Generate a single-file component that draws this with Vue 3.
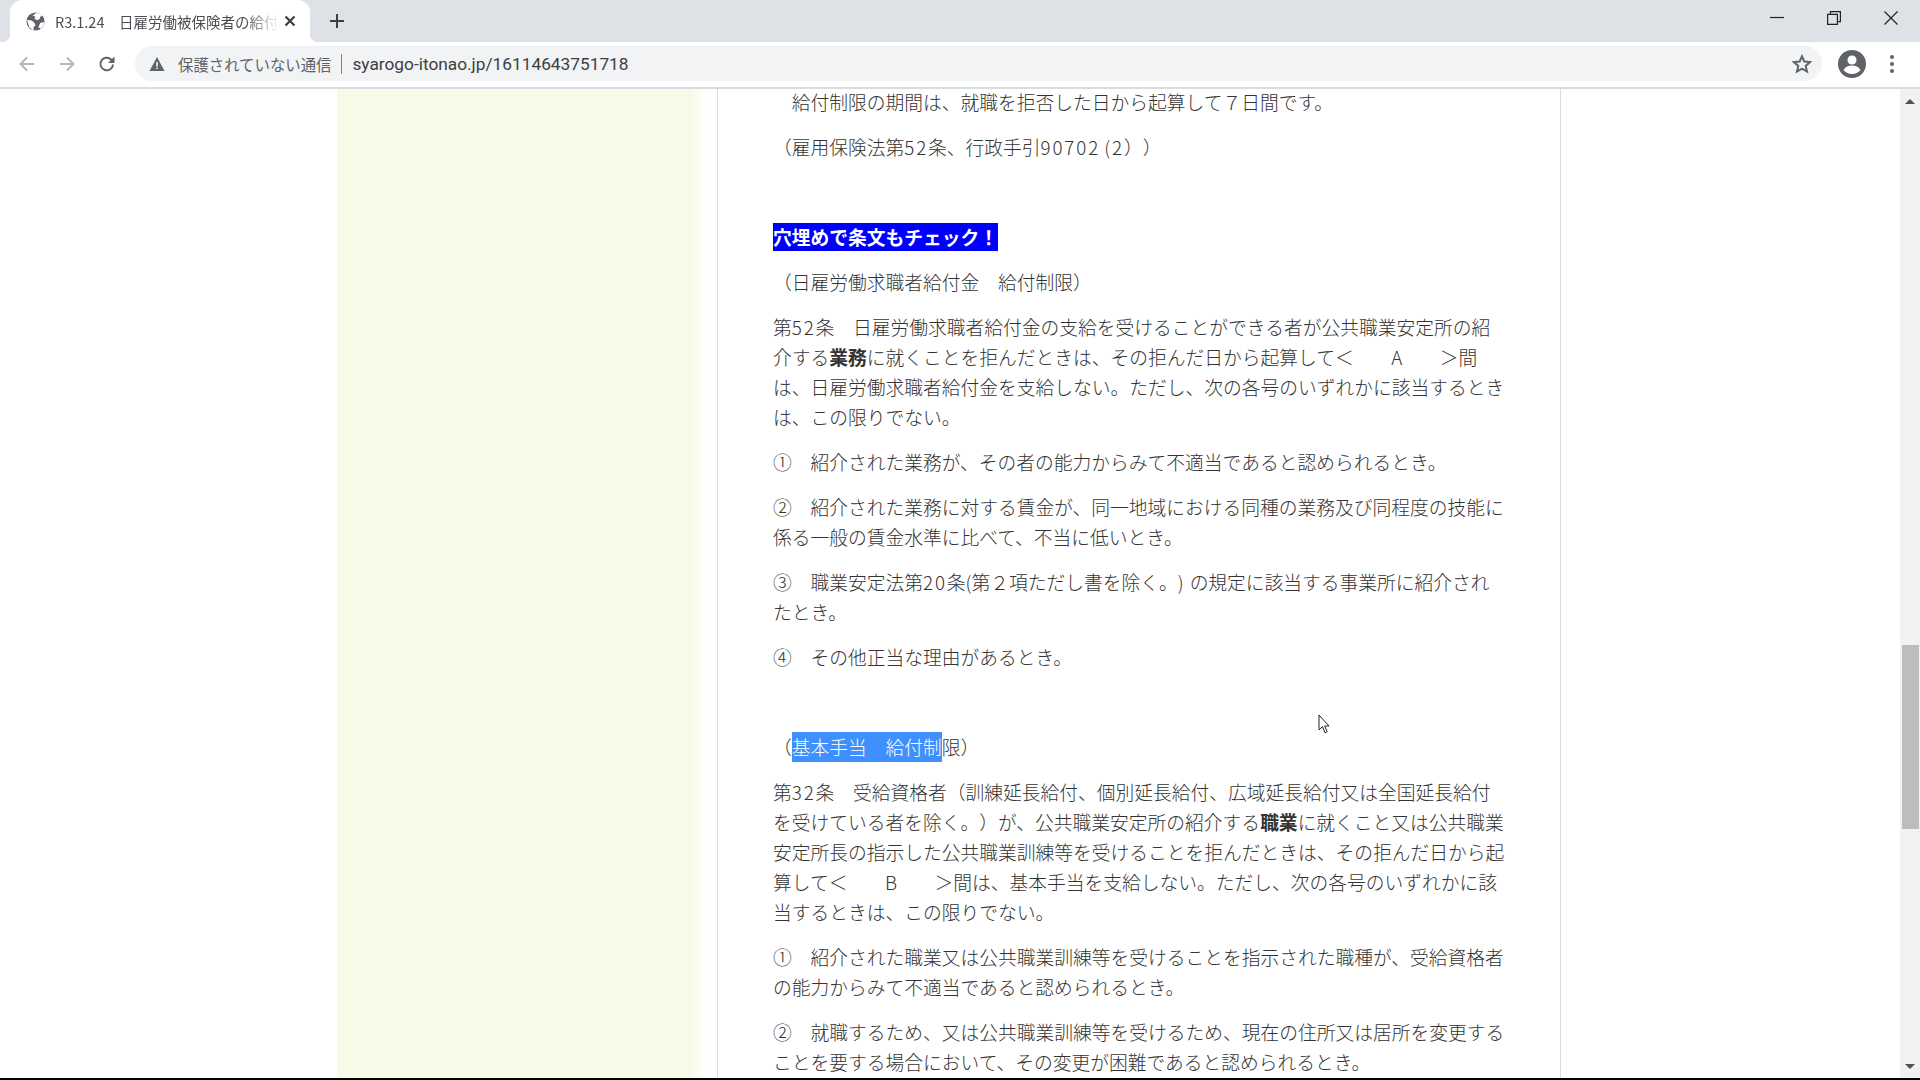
<template>
  <div class="window">
    <!-- tab strip -->
    <div class="tabstrip">
      <div class="tab">
        <svg class="favicon" viewBox="0 0 20 20">
          <circle cx="10" cy="10" r="9.500" fill="#5f6368" />
          <path d="M1 8.500l5 .5 3 2.500 1 3-2 1v4L3.500 16zM10.500 1c3 0 5.500 1 7 3l-2.500 1-1 3-3 .5-2-1.500 1-2-3-1zM15 11.500l4-1c0 3-1 5-3.500 7L13 16z" fill="#fff" />
        </svg>
        <span class="tab-title">R3.1.24　日雇労働被保険者の給付</span>
        <svg class="tab-close" viewBox="0 0 12 12">
          <path d="M1.500 1.500l9 9M10.500 1.500l-9 9" stroke="#3c4043" stroke-width="2.200" fill="none" />
        </svg>
      </div>
      <svg class="new-tab" viewBox="0 0 16 16">
        <path d="M8 1v14M1 8h14" stroke="#3c4043" stroke-width="2" fill="none" />
      </svg>
      <div class="win-controls">
        <svg viewBox="0 0 14 14"><path d="M0 6.500h14" stroke="#222" stroke-width="1.200" /></svg>
        <svg viewBox="0 0 14 14"><path d="M.6 3.400h9.800v10H.6zM3.400 3.400V.6h10v10h-3" stroke="#222" stroke-width="1.200" fill="none" /></svg>
        <svg viewBox="0 0 14 14"><path d="M.5.5l13 13M13.500.5l-13 13" stroke="#222" stroke-width="1.200" fill="none" /></svg>
      </div>
    </div>

    <!-- address bar -->
    <div class="toolbar">
      <svg class="nav" viewBox="0 0 20 20">
        <path d="M17 10H4M10 3.500L3.500 10l6.500 6.500" stroke="#b4b6b9" stroke-width="2" fill="none" />
      </svg>
      <svg class="nav" viewBox="0 0 20 20">
        <path d="M3 10h13M10 3.500l6.500 6.500-6.500 6.500" stroke="#b4b6b9" stroke-width="2" fill="none" />
      </svg>
      <svg class="nav" viewBox="0 0 20 20">
        <path d="M16 10.500a6.300 6.300 0 1 1-1.900-5L16.500 8" stroke="#5f6368" stroke-width="2" fill="none" />
        <path d="M17.500 2.500v6.500H11z" fill="#5f6368" />
      </svg>
      <div class="omnibox">
        <svg class="warn" viewBox="0 0 16 16"><path d="M8 1l7.500 14H.5z" fill="#5f6368" /><path d="M7.200 6h1.600v4.500H7.200zM7.200 11.500h1.600V13H7.200z" fill="#f1f3f4" /></svg>
        <span class="insecure">保護されていない通信</span>
        <span class="sep"></span>
        <span class="url">syarogo-itonao.jp/16114643751718</span>
        <svg class="star" viewBox="0 0 20 20">
          <path d="M10 2.300l2.300 5.200 5.700.6-4.300 3.800 1.300 5.600-5-2.900-5 2.900 1.300-5.600L2 8.100l5.700-.6z" stroke="#5f6368" stroke-width="2" fill="none" />
        </svg>
      </div>
      <svg class="avatar" viewBox="0 0 28 28">
        <circle cx="14" cy="14" r="14" fill="#5f6368" />
        <circle cx="14" cy="10" r="4.500" fill="#fff" />
        <path d="M5.500 20c2-3.500 5-4.500 8.500-4.500s6.500 1 8.500 4.500c-2 2.600-5 4-8.500 4s-6.500-1.400-8.500-4z" fill="#fff" />
      </svg>
      <div class="menu"><i></i><i></i><i></i></div>
    </div>

    <!-- page -->
    <div class="viewport">
      <div class="page">
        <aside class="sidebar"></aside>
        <main class="article">
          <p>　給付制限の期間は、就職を拒否した日から起算して７日間です。</p>
          <p>（雇用保険法第<span class="num">52</span>条、行政手引<span class="num">90702</span> <span class="num">(2</span>））</p>
          <p>&nbsp;</p>
          <p><b class="mark">穴埋めで条文もチェック！</b></p>
          <p>（日雇労働求職者給付金　給付制限）</p>
          <p>第<span class="num">52</span>条　日雇労働求職者給付金の支給を受けることができる者が公共職業安定所の紹<br />介する<b>業務</b>に就くことを拒んだときは、その拒んだ日から起算して＜　　A　　＞間<br />は、日雇労働求職者給付金を支給しない。ただし、次の各号のいずれかに該当するとき<br />は、この限りでない。</p>
          <p>①　紹介された業務が、その者の能力からみて不適当であると認められるとき。</p>
          <p>②　紹介された業務に対する賃金が、同一地域における同種の業務及び同程度の技能に<br />係る一般の賃金水準に比べて、不当に低いとき。</p>
          <p>③　職業安定法第<span class="num">20</span>条(第２項ただし書を除く。<span class="paren">)</span>の規定に該当する事業所に紹介され<br />たとき。</p>
          <p>④　その他正当な理由があるとき。</p>
          <p>&nbsp;</p>
          <p>（<span class="selected">基本手当　給付制</span>限）</p>
          <p>第<span class="num">32</span>条　受給資格者（訓練延長給付、個別延長給付、広域延長給付又は全国延長給付<br />を受けている者を除く。）が、公共職業安定所の紹介する<b>職業</b>に就くこと又は公共職業<br />安定所長の指示した公共職業訓練等を受けることを拒んだときは、その拒んだ日から起<br />算して＜　　B　　＞間は、基本手当を支給しない。ただし、次の各号のいずれかに該<br />当するときは、この限りでない。</p>
          <p>①　紹介された職業又は公共職業訓練等を受けることを指示された職種が、受給資格者<br />の能力からみて不適当であると認められるとき。</p>
          <p>②　就職するため、又は公共職業訓練等を受けるため、現在の住所又は居所を変更する<br />ことを要する場合において、その変更が困難であると認められるとき。</p>
        </main>
      </div>
      <div class="scrollbar">
        <span class="arrow up"></span>
        <div class="thumb"></div>
        <span class="arrow down"></span>
      </div>
      <svg class="cursor" viewBox="0 0 12 20">
        <path d="M1 1v15l3.500-3.300 2.500 6 2.200-1-2.500-5.700H11z" fill="#fff" stroke="#222" stroke-width="1" />
      </svg>
    </div>
  </div>
</template>

<script setup>
</script>

<style>
html,
body {
  margin: 0;
  overflow: hidden;
}
</style>

<style scoped>
.window {
  width: 1920px;
  height: 1080px;
  display: flex;
  flex-direction: column;
  background: #fff;
  border-bottom: 2px solid #000;
  box-sizing: border-box;
  font-family: "Noto Sans CJK JP", "Noto Sans", sans-serif;
  overflow: hidden;
}

.tabstrip {
  height: 42px;
  flex-shrink: 0;
  background: #dee1e6;
  display: flex;
  align-items: center;
  padding-left: 10px;
}

.tab {
  position: relative;
  width: 300px;
  height: 42px;
  box-sizing: border-box;
  background: #fff;
  border-radius: 12px 12px 0 0;
  display: flex;
  align-items: center;
  padding: 0 14px 0 16px;
}

/* little flares at the foot of the active tab */
.tab::before,
.tab::after {
  content: "";
  position: absolute;
  bottom: 0;
  width: 8px;
  height: 8px;
}

.tab::before {
  left: -8px;
  background: radial-gradient(circle at 0 0, transparent 8px, #fff 8.500px);
}

.tab::after {
  right: -8px;
  background: radial-gradient(circle at 100% 0, transparent 8px, #fff 8.500px);
}

.favicon {
  width: 19px;
  height: 19px;
  flex-shrink: 0;
}

.tab-title {
  margin-left: 10px;
  width: 224px;
  overflow: hidden;
  white-space: nowrap;
  font-size: 14.500px;
  color: #4a4d51;
  -webkit-mask-image: linear-gradient(to right, #000 85%, transparent);
  mask-image: linear-gradient(to right, #000 85%, transparent);
}

.tab-close {
  width: 12px;
  height: 12px;
  margin-left: 5px;
  flex-shrink: 0;
}

.new-tab {
  width: 16px;
  height: 16px;
  margin-left: 19px;
}

.win-controls {
  margin-left: auto;
  display: flex;
  gap: 43px;
  padding-right: 22px;
  margin-top: -6px;
}

.win-controls svg {
  width: 14px;
  height: 14px;
}

.toolbar {
  height: 47px;
  flex-shrink: 0;
  box-sizing: border-box;
  display: flex;
  align-items: center;
  padding: 0 0 2px 17px;
  border-bottom: 2px solid #dadce0;
}

.nav {
  width: 20px;
  height: 20px;
  margin-right: 20px;
  flex-shrink: 0;
}

.omnibox {
  margin-left: -2px;
  width: 1687px;
  height: 35px;
  border-radius: 18px;
  background: #f1f3f4;
  display: flex;
  align-items: center;
  padding: 0 10px 0 14px;
  box-sizing: border-box;
}

.warn {
  width: 16px;
  height: 16px;
  flex-shrink: 0;
}

.insecure {
  margin-left: 13px;
  font-size: 15.400px;
  color: #5f6368;
  white-space: nowrap;
}

.sep {
  width: 1px;
  height: 20px;
  background: #80868b;
  margin: 0 10px;
}

.url {
  font-family: Roboto, "Noto Sans", sans-serif;
  font-size: 17.300px;
  color: #3c4043;
  white-space: nowrap;
}

.star {
  margin-left: auto;
  width: 20px;
  height: 20px;
}

.avatar {
  width: 28px;
  height: 28px;
  margin-left: 16px;
  flex-shrink: 0;
}

.menu {
  margin-left: 24px;
  display: flex;
  flex-direction: column;
  gap: 3px;
}

.menu i {
  width: 4px;
  height: 4px;
  border-radius: 50%;
  background: #5f6368;
}

.viewport {
  flex: 1;
  min-height: 0;
  display: flex;
  position: relative;
}

.page {
  flex: 1;
  display: flex;
  overflow: hidden;
  padding-left: 337px;
}

.sidebar {
  width: 368px;
  flex-shrink: 0;
  background: linear-gradient(to right, #f7fae6 96%, #fff);
}

.article {
  margin-left: 12px;
  margin-top: -2px;
  width: 844px;
  flex-shrink: 0;
  box-sizing: border-box;
  padding: 0 55px;
  border-left: 1px solid #dcdcdc;
  border-right: 1px solid #dcdcdc;
  font-size: 18.750px;
  line-height: 30px;
  font-weight: 300;
  color: #333;
  white-space: nowrap;
  text-spacing-trim: space-all;
}

.article p {
  margin: 0 0 15px;
}

.article b {
  font-weight: 700;
}

.num {
  letter-spacing: 0.1em;
}

.paren {
  letter-spacing: 0.32em;
}

.mark {
  display: inline-block;
  height: 28px;
  line-height: 28px;
  background: #0000ff;
  color: #fff;
}

.selected {
  display: inline-block;
  background: #3f8ffd;
  color: #fff;
}

.scrollbar {
  width: 20px;
  flex-shrink: 0;
  background: #f1f1f1;
  display: flex;
  flex-direction: column;
  align-items: center;
  padding-top: 10px;
  box-sizing: border-box;
}

.arrow {
  width: 0;
  height: 0;
  border-left: 5px solid transparent;
  border-right: 5px solid transparent;
}

.arrow.up {
  border-bottom: 5px solid #505050;
}

.arrow.down {
  border-top: 5px solid #505050;
  margin-top: 235px;
}

.thumb {
  width: 17px;
  height: 184px;
  background: #bdbdbd;
  margin-top: 541px;
}

.cursor {
  position: absolute;
  left: 1318px;
  top: 625px;
  width: 12px;
  height: 20px;
}
</style>
